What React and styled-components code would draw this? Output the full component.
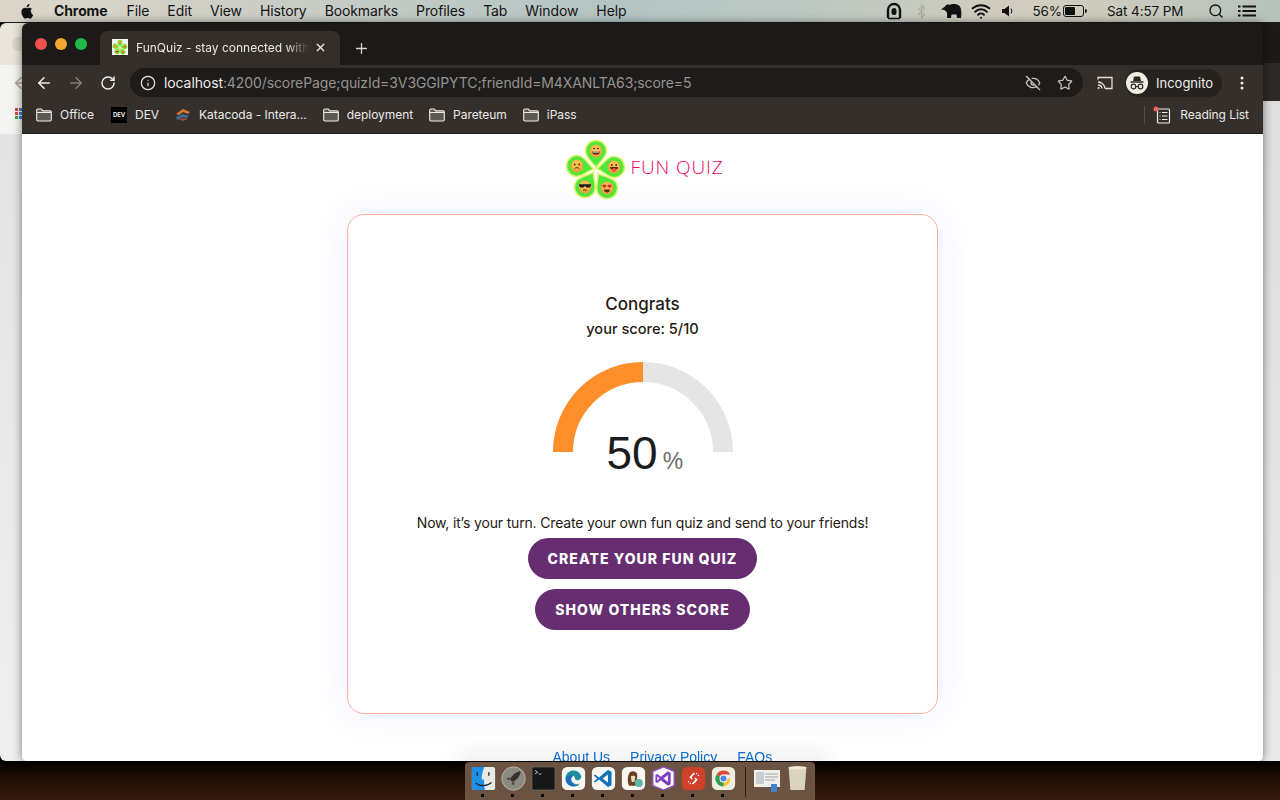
import React from "react";
import styled, { createGlobalStyle } from "styled-components";
import { ArrowLeft, ArrowRight, RotateCw, Info, EyeOff, Star, Plus, X, Search, Bluetooth, Wifi } from "lucide-react";

const Global = createGlobalStyle`
  html, body { margin: 0; padding: 0; width: 1280px; height: 800px; overflow: hidden; }
  * { box-sizing: border-box; }
`;

const Desktop = styled.div`
  position: relative; width: 1280px; height: 800px; overflow: hidden;
  font-family: Inter, "Liberation Sans", sans-serif;
  background: linear-gradient(180deg, #000 761px, #1c0d06 775px, #34190c 800px);
`;

const MenuBar = styled.div`
  position: absolute; left: 0; top: 0; width: 1280px; height: 23px;
  display: flex; align-items: center; padding-left: 20px;
  border-bottom: 1px solid #1a1a18;
  background: linear-gradient(90deg, #dcd6c9 0, #cfcfc6 200px, #b3c4c3 620px, #bcc8c2 800px, #d2cdbe 1020px, #c7c9bd 1150px, #b5c1bc 1280px);
  color: #141414; font-size: 14px; letter-spacing: -0.1px;
`;
const MenuItem = styled.span`
  margin-left: ${p => p.$gap}px; font-weight: ${p => (p.$bold ? 700 : 400)}; white-space: nowrap; line-height: 22px;
  font-size: ${p => (p.$small ? 13.5 : 14)}px;
`;
const MenuIcon = styled.span`
  margin-left: ${p => p.$gap}px; display: flex; align-items: center; justify-content: center; color: #111; height: 22px;
`;

const BackLeft = styled.div`
  position: absolute; left: 0; top: 23px; width: 60px; height: 738px; border-radius: 6px 0 0 6px;
  background: linear-gradient(180deg, #e9e5da 0, #e9e5da 42px, #f3f3f1 42px, #f3f3f1 111px, #e4e4e4 111px, #efefef 100%);
`;
const BackDot = styled.span`
  position: absolute; left: 12px; top: 14px; width: 14px; height: 14px; border-radius: 50%; background: #d8d3c6;
`;
const BackArrow = styled.span`
  position: absolute; left: 12px; top: 51px; color: #a8a49c; display: flex;
`;
const BackApps = styled.span`
  position: absolute; left: 15px; top: 85px; display: grid; grid-template-columns: repeat(3, 3px); gap: 1px;
`;
const AppDot = styled.span`
  width: 3px; height: 3px; background: ${p => p.$c};
`;
const BackRight = styled.div`
  position: absolute; left: 1240px; top: 23px; width: 40px; height: 738px;
  background: linear-gradient(180deg, #1b1a18 0, #1b1a18 40px, #2d2926 40px, #2d2926 78px, #dedede 78px, #eaeaea 100%);
`;

const Browser = styled.div`
  position: absolute; left: 22px; top: 23px; width: 1241px; height: 738px;
  border-radius: 6px 6px 5px 5px; overflow: hidden; display: flex; flex-direction: column;
  box-shadow: 0 0 10px rgba(0,0,0,.5);
`;
const TabStrip = styled.div`
  height: 42px; flex: none; background: #1b1a18; display: flex; align-items: flex-end; padding-left: 78px;
`;
const Lights = styled.div`
  position: absolute; left: 13px; top: 15px; display: flex; gap: 8px;
`;
const Light = styled.span`
  width: 12px; height: 12px; border-radius: 50%; background: ${p => p.$c};
`;
const Tab = styled.div`
  width: 240px; height: 34px; background: #352f2c; border-radius: 8px 8px 0 0;
  display: flex; align-items: center; padding: 0 0 2px 12px; color: #e9e6e2; font-size: 12px; position: relative;
`;
const Favicon = styled.span`
  width: 16px; height: 16px; background: #fdfdfb; display: flex; flex: none;
`;
const TabTitle = styled.span`
  margin-left: 8px; width: 173px; overflow: hidden; white-space: nowrap;
  -webkit-mask-image: linear-gradient(90deg, #000 150px, transparent 173px);
  mask-image: linear-gradient(90deg, #000 150px, transparent 173px);
`;
const TabClose = styled.span`
  margin-left: 5px; display: flex; color: #efeeec;
`;
const NewTab = styled.span`
  margin: 0 0 8px 13px; color: #d9d6d2; display: flex;
`;
const Toolbar = styled.div`
  height: 35px; flex: none; background: #352f2c; display: flex; align-items: center; padding-left: 13px;
`;
const NavBtn = styled.span`
  width: 18px; margin-right: ${p => p.$end ? 13 : 14}px; display: flex; justify-content: center; color: ${p => (p.$dim ? "#837e79" : "#efedea")};
`;
const Omnibox = styled.div`
  width: 953px; height: 29px; border-radius: 15px; background: #1d1c1a;
  display: flex; align-items: center; padding-left: 10px; font-size: 14px; color: #98938e; letter-spacing: -0.1px;
`;
const SiteInfo = styled.span`
  display: flex; color: #e8e6e2; margin-right: 8px;
`;
const Host = styled.span`
  color: #efedea;
`;
const OmniActions = styled.span`
  margin-left: auto; display: flex; align-items: center; gap: 16px; padding-right: 10px; color: #c6c3be;
`;
const CastBtn = styled.span`
  margin-left: 14px; display: flex; color: #e2e0dc;
`;
const ProfilePill = styled.div`
  margin-left: 12px; width: 97px; height: 28px; border-radius: 14px; background: #25221f;
  display: flex; align-items: center; padding-left: 1px; color: #efedea; font-size: 13px;
`;
const Avatar = styled.span`
  width: 22px; height: 22px; border-radius: 50%; background: #f3eee2; display: flex; align-items: center; justify-content: center; margin-right: 8px;
`;
const Kebab = styled.span`
  margin-left: 18px; display: flex; color: #efedea;
`;
const Bookmarks = styled.div`
  height: 34px; flex: none; background: #352f2c; display: flex; align-items: center; padding: 0 0 4px 14px; gap: 16px;
  color: #ece9e5; font-size: 12px; letter-spacing: -0.05px; border-bottom: 1px solid #221f1d;
`;
const Bookmark = styled.span`
  display: flex; align-items: center; gap: 8px; white-space: nowrap;
  &:first-child { margin-right: 1px; }
`;
const DevIcon = styled.span`
  width: 16px; height: 16px; background: #000; color: #eee; font-size: 6px; font-weight: 700; display: flex; align-items: center; justify-content: center;
`;
const ReadingList = styled.span`
  margin-left: auto; margin-right: 14px; padding-left: 8px; height: 18px; border-left: 1px solid #544e4a;
  display: flex; align-items: center; gap: 9px;
`;

const Page = styled.main`
  flex: 1; min-height: 0; overflow: hidden; background: #fff; display: flex; flex-direction: column; align-items: center; color: #1f1a14;
`;
const Brand = styled.header`
  height: 80px; flex: none; display: flex; align-items: flex-start; padding: 4px 0 0 3px;
`;
const BrandName = styled.span`
  margin: 17px 0 0 4px; color: #f0005f; font: 300 19px/24px "Open Sans", sans-serif; letter-spacing: 0.9px; white-space: nowrap;
`;
const Card = styled.section`
  width: 591px; height: 500px; flex: none; border: 1px solid #fdb0a6; border-radius: 17px; background: #fff;
  box-shadow: 0 0 32px rgba(110,110,255,.12);
  display: flex; flex-direction: column; align-items: center; padding-top: 79px;
`;
const Title = styled.h1`
  margin: 0; font-size: 17px; line-height: 20px; font-weight: 500; color: #1f1a14;
`;
const Score = styled.p`
  margin: 5px 0 0; font-size: 14.6px; line-height: 20px; font-weight: 500;
`;
const Gauge = styled.div`
  position: relative; width: 180px; height: 90px; margin-top: 23px;
`;
const GaugeValue = styled.div`
  position: absolute; left: 54px; top: 65px; display: flex; align-items: baseline; gap: 5px; font-family: "Liberation Sans", sans-serif; white-space: nowrap;
`;
const GaugeNumber = styled.span`
  font-size: 46px; line-height: 52px; color: #1c1c1c;
`;
const GaugeUnit = styled.span`
  font-size: 23px; line-height: 30px; color: #6a6a6a;
`;
const Prompt = styled.p`
  margin: 61px 0 0; font-size: 14px; line-height: 20px; color: #1f1a14; white-space: nowrap; letter-spacing: -0.17px;
`;
const ActionButton = styled.button`
  height: 41px; width: ${p => p.$w}px; margin-top: ${p => p.$top}px; border: 0; border-radius: 21px; background: #662d70; color: #fff;
  font: 800 14px Inter, sans-serif; letter-spacing: 1.05px; padding: 0; flex: none;
`;
const Footer = styled.footer`
  margin-top: 23px; flex: none; width: 400px; height: 52px; padding: 12px 0 0 110px;
  background: linear-gradient(180deg, #fff 0, #f2f2f2 26px);
  -webkit-mask-image: linear-gradient(90deg, transparent, #000 30px, #000 370px, transparent);
  mask-image: linear-gradient(90deg, transparent, #000 30px, #000 370px, transparent);
  display: flex; gap: 20px; font: 14px/16px "Liberation Sans", sans-serif;
`;
const FooterLink = styled.a`
  color: #0a6ccf; white-space: nowrap;
`;

const Dock = styled.div`
  position: absolute; left: 465px; top: 762px; width: 350px; height: 38px; background: #6b5241; border-radius: 4px 4px 0 0;
  display: flex; padding: 4px 0 0 3px;
`;
const DockSlot = styled.span`
  width: 30px; height: 34px; position: relative; display: flex; justify-content: center; align-items: ${p => (p.$wide ? "center" : "flex-start")}; flex: none;
  padding-bottom: ${p => (p.$wide ? 6 : 0)}px;
  svg { width: ${p => (p.$wide ? 28 : 25)}px; height: ${p => (p.$wide ? 28 : 25)}px; flex: none; }
`;
const RunDot = styled.span`
  position: absolute; left: 13px; bottom: 3px; width: 3px; height: 3px; background: #0b0b0b;
`;
const DockDivider = styled.span`
  width: 1px; height: 30px; margin: 1px 6px 0 7px; background: #2d1d14; flex: none;
`;

const pins = [
  { x: 30, y: 13, r: 0, face: "grin" },
  { x: 11, y: 28, r: -80, face: "sad" },
  { x: 48, y: 29, r: 84, face: "tongue" },
  { x: 19, y: 49, r: -150, face: "shades" },
  { x: 41, y: 50, r: 148, face: "hearts" },
];

const Face = ({ kind }) => (
  <g>
    <circle r="6.4" fill="#f2a33c" />
    <circle r="5" cy="-1" fill="#f7bf4c" />
    {kind === "grin" && (<><path d="M-3-2.5h2M1-2.5h2" stroke="#4a2a10" strokeWidth="1" /><path d="M-4 0.2h8a4 3.6 0 0 1-8 0z" fill="#5b2610" /><path d="M-3.4 .4h6.8v1h-6.8z" fill="#fff" /></>)}
    {kind === "sad" && (<><circle cx="-2.2" cy="-1.5" r=".9" fill="#4a2a10" /><circle cx="2.2" cy="-1.5" r=".9" fill="#4a2a10" /><path d="M-2.6 3a3 2.6 0 0 1 5.2 0" stroke="#4a2a10" strokeWidth="1" fill="none" /></>)}
    {kind === "tongue" && (<><circle cx="-2.2" cy="-2" r=".9" fill="#4a2a10" /><circle cx="2.2" cy="-2" r=".9" fill="#4a2a10" /><path d="M-4 0h8a4 3 0 0 1-8 0z" fill="#5b2610" /><circle cy="3" r="2" fill="#e6524f" /></>)}
    {kind === "shades" && (<><path d="M-6-2.8H6V-1.6L4.6 .6H1.4L0-1.2-1.4 .6H-4.6L-6-1.6z" fill="#1c1c1c" /><path d="M-2 3h4" stroke="#4a2a10" strokeWidth="1" /></>)}
    {kind === "hearts" && (<><path d="M-2.6 0.2L-4.6-1.8a1.2 1.2 0 0 1 2-1.2 1.2 1.2 0 0 1 2 1.2z" fill="#e3263c" /><path d="M2.6 0.2L.6-1.8a1.2 1.2 0 0 1 2-1.2 1.2 1.2 0 0 1 2 1.2z" fill="#e3263c" /><path d="M-3 1.6h6a3 2.8 0 0 1-6 0z" fill="#5b2610" /></>)}
  </g>
);

const Logo = ({ size }) => (
  <svg width={size} height={size} viewBox="0 0 60 62">
    {pins.map(p => (
      <g key={p.face} transform={`translate(${p.x} ${p.y})`}>
        <path transform={`rotate(${p.r})`} d="M0 17C-2 12-10.500 7-10.500 0A10.500 10.500 0 1 1 10.500 0C10.500 7 2 12 0 17Z" fill="#4ee83a" stroke="#e2f16a" strokeWidth="1.500" />
        <Face kind={p.face} />
      </g>
    ))}
  </svg>
);

const Apple = () => (
  <svg width="14" height="16" viewBox="0 0 14 16"><path fill="#111" d="M10.6 8.4c0-1.6 1.3-2.4 1.4-2.4-.8-1.1-2-1.3-2.400-1.300-1-.1-2 .6-2.500.6s-1.300-.6-2.200-.6C3.800 4.700 2.700 5.400 2 6.500.7 8.700 1.700 12 3 13.800c.6.900 1.300 1.900 2.300 1.900.9 0 1.200-.6 2.300-.6s1.400.6 2.300.6c1 0 1.600-.9 2.200-1.800.7-1 1-2 1-2-.1-.1-2-.8-2-3.500zM8.800 3.200c.5-.6.800-1.400.7-2.200-.7 0-1.600.5-2.100 1.100-.4.500-.8 1.300-.7 2.100.8.100 1.600-.4 2.100-1z" /></svg>
);
const Tunnel = () => (
  <svg width="16" height="18" viewBox="0 0 16 18"><path fill="none" stroke="#111" strokeWidth="2.400" d="M2 16V8a6 6 0 0 1 12 0v8" /><rect x="5.500" y="6" width="5" height="7" rx="2.500" fill="#111" /><path d="M2 16.500h12" stroke="#111" strokeWidth="1.500" /></svg>
);
const Elephant = () => (
  <svg width="21" height="16" viewBox="0 0 21 16"><path fill="#111" d="M0 6.500 4 3.500C5 1.500 7 1 8.500 2 11 .5 16 .5 18.500 3c1.800 1.800 2 6 1.800 9l-.3 3h-4l-.5-3.500h-5L10 15H6.200L6 9.500C5 8.500 4 7.500 3.500 7z" /></svg>
);
const Volume = () => (
  <svg width="14" height="14" viewBox="0 0 14 14"><path fill="#111" d="M1 5h2.500L8 1.500v11L3.500 9H1z" /><path d="M10 4.500a4 4 0 0 1 0 5" stroke="#111" fill="none" strokeWidth="1" /></svg>
);
const Battery = () => (
  <svg width="24" height="12" viewBox="0 0 24 12"><rect x=".5" y=".5" width="20" height="11" rx="2.500" fill="none" stroke="#111" /><rect x="2" y="2" width="10" height="8" rx="1" fill="#111" /><path d="M22 4v4a2 2 0 0 0 0-4z" fill="#111" /></svg>
);
const ListMenu = () => (
  <svg width="18" height="12" viewBox="0 0 18 12"><path d="M0 1.500h2.500M4.500 1.500H18M0 6h2.500M4.500 6H18M0 10.500h2.500M4.500 10.500H18" stroke="#111" strokeWidth="1.800" /></svg>
);
const FolderIcon = () => (
  <svg width="16" height="14" viewBox="0 0 16 14"><path d="M.7 2.200C.7 1.500 1.200 1 1.900 1h3.400l1.500 1.900h7.300c.7 0 1.200.5 1.200 1.200v7.700c0 .7-.5 1.200-1.200 1.200H1.900c-.7 0-1.200-.5-1.200-1.200z" fill="#5e5853" stroke="#f0eeea" strokeWidth="1.100" /><path d="M1 4.500h14" stroke="#f0eeea" strokeWidth="1" /></svg>
);
const Katacoda = () => (
  <svg width="16" height="14" viewBox="0 0 16 14"><path d="M1 6 8 1l7 3-2 2-5-2-4 3z" fill="#d7792e" /><path d="M1 9l7-3 6 2-2 2-4-1-6 3z" fill="#3c6c9c" /><path d="M3 11l6-1 4 1-5 2z" fill="#a04f2b" /></svg>
);
const Cast = () => (
  <svg width="16" height="14" viewBox="0 0 16 14" fill="none" stroke="currentColor" strokeWidth="1.300"><path d="M1 3.500V1.500h14v11H8" /><path d="M1 6a7 7 0 0 1 7 6.500M1 9a4 4 0 0 1 4 3.500" /><circle cx="1.600" cy="12" r="1" fill="currentColor" stroke="none" /></svg>
);
const Incognito = () => (
  <svg width="18" height="18" viewBox="0 0 18 18"><path d="M5 7l1-4.500h6L13 7z" fill="#2a2725" /><path d="M2.500 8h13" stroke="#2a2725" strokeWidth="1.500" /><circle cx="5.500" cy="12.500" r="2.300" fill="none" stroke="#2a2725" strokeWidth="1.200" /><circle cx="12.500" cy="12.500" r="2.300" fill="none" stroke="#2a2725" strokeWidth="1.200" /><path d="M7.800 12.500h2.400" stroke="#2a2725" strokeWidth="1.200" /></svg>
);
const KebabIcon = () => (
  <svg width="4" height="14" viewBox="0 0 4 14" fill="currentColor"><circle cx="2" cy="2" r="1.500" /><circle cx="2" cy="7" r="1.500" /><circle cx="2" cy="12" r="1.500" /></svg>
);
const ReadingIcon = () => (
  <svg width="18" height="18" viewBox="0 0 18 18"><rect x="4.500" y="3" width="12" height="14" rx="1" fill="none" stroke="#efedea" strokeWidth="1.200" /><path d="M9 6.500h5.500M9 10h5.500M9 13.500h5.500M6.500 6.500h1M6.500 10h1M6.500 13.500h1" stroke="#efedea" strokeWidth="1.200" /><circle cx="3" cy="3" r="2.500" fill="#f2645a" /></svg>
);

const Finder = () => (
  <svg viewBox="0 0 28 28"><rect x="1" y="1" width="26" height="26" rx="2" fill="#e9e9e4" /><path d="M3 1h12c-2 4-3 9-3 14h2.500c0 4 .5 8 1 12H3a2 2 0 0 1-2-2V3a2 2 0 0 1 2-2z" fill="#1f8fe6" /><path d="M7 7v4M20 7v4" stroke="#1a2530" strokeWidth="1.500" /><path d="M5 19c5 4 13 4 18-.5" stroke="#1a2530" strokeWidth="1.200" fill="none" /></svg>
);
const Launchpad = () => (
  <svg viewBox="0 0 28 28"><circle cx="14" cy="14" r="13.500" fill="#8b8a80" /><circle cx="14" cy="14" r="13" fill="none" stroke="#b5b4aa" /><path d="M21 6c-5 1-9 5-11 9l3 3c4-2 8-6 9-11z" fill="#35332f" /><path d="M10 13l-4 1 3 2zM15 18l-1 4-2-3z" fill="#35332f" /></svg>
);
const Terminal = () => (
  <svg viewBox="0 0 28 28"><rect x="1" y="1" width="26" height="26" rx="2" fill="#171717" stroke="#6a6a62" /><path d="M4.500 5l3 2-3 2" stroke="#eee" fill="none" strokeWidth=".9" /><path d="M8.500 9h3" stroke="#eee" strokeWidth=".9" /></svg>
);
const AppTile = ({ bg = "#f8f7f2", children }) => (
  <svg viewBox="0 0 28 28"><rect x="1" y="1" width="26" height="26" rx="6" fill={bg} />{children}</svg>
);
const Edge = () => (
  <AppTile><path d="M5 14a9 9 0 0 1 17.500-3c.8 3-1.500 5-4 5-2 0-3-1-3-2.500 0-2-2-3.500-4.500-3S6 13 5 14z" fill="#1f8f9e" /><path d="M5 14c0 6 5 9.500 10 9 2.500-.2 5-1.500 6-3.500-4 2-9 .5-9.500-4C11 13 13 11 15.500 11 11 9 6 11 5 14z" fill="#1e6fc4" /><path d="M12 17c1 4 6 5 9.500 2.500C17 21 13 20 12 17z" fill="#4fc65f" /></AppTile>
);
const VSCode = () => (
  <AppTile><path d="M19 4.500l4 2v15l-4 2L9 15l-4.500 3.500L3 17.500 7 14 3 10.500l1.500-1L9 13zM19 9.500L13 14l6 4.500z" fill="#0f74b8" /></AppTile>
);
const Beaver = () => (
  <AppTile><path d="M9 22c-2-5-2-11 1-15 3-2 7-1 8 2 1 4-1 6-1 13z" fill="#6d3f1f" /><path d="M11 12c1-1.500 4-1.500 5 0l-1 6h-3z" fill="#e9dcc6" /><circle cx="20" cy="19" r="4.500" fill="#5fb7a5" /></AppTile>
);
const VisualStudio = () => (
  <svg viewBox="0 0 28 28"><path d="M14 1l12 5v16l-12 5-12-5V6z" fill="#faf8fb" stroke="#8a4bc4" strokeWidth="1.500" /><path d="M19 6l3 1.500v13L19 22l-8-6-4 3-2-1V10l2-1 4 3zM19 10l-5 4 5 4zM7 11.500v5l2.500-2.500z" fill="#7d3fc0" /></svg>
);
const RemoteDesktop = () => (
  <AppTile bg="#d1412a"><path d="M15 8l-4.500 4.500 2 2M13 20l4.500-4.500-2-2" stroke="#fff" strokeWidth="1.700" fill="none" /><path d="M8 17l3 3M20 11l-3-3" stroke="#fff" strokeWidth="1.500" strokeDasharray="1.500 1.500" /></AppTile>
);
const ChromeApp = () => (
  <AppTile bg="#efece0">
    <path d="M14 14 6.200 9.500A9 9 0 0 1 21.800 9.500H14z" fill="#dd4a3c" />
    <path d="M14 14 6.200 9.500A9 9 0 0 0 14 23l4-9z" fill="#2f9e4f" />
    <path d="M14 14h7.800A9 9 0 0 1 14 23z" fill="#f6c230" />
    <circle cx="14" cy="14" r="4.400" fill="#fff" /><circle cx="14" cy="14" r="3.400" fill="#4a86e8" />
  </AppTile>
);
const DocThumb = () => (
  <svg viewBox="0 0 28 28"><rect x="1" y="4" width="26" height="17" fill="#f1efe8" /><rect x="3" y="6" width="8" height="12" fill="#c5cdd2" /><path d="M12 8h13M12 11h13M12 14h10" stroke="#9aa6ad" /><rect x="18" y="18" width="6" height="8" fill="#3f80c8" /></svg>
);
const Trash = () => (
  <svg viewBox="1 1 22 28"><path d="M2 2h20l-2 26H4z" fill="#d9d3bf" /><ellipse cx="12" cy="3" rx="10" ry="2" fill="#ece7d8" /></svg>
);

const left = ["File", "Edit", "View", "History", "Bookmarks", "Profiles", "Tab", "Window", "Help"];
const dockApps = [Finder, Launchpad, Terminal, Edge, VSCode, Beaver, VisualStudio, RemoteDesktop, ChromeApp];
const apps = ["#e2453c", "#3d7fd0", "#3aa657", "#e2453c", "#3d7fd0", "#e09a2e", "#3aa657", "#3d7fd0", "#e09a2e"];

const R = 80;
export default function App() {
  return (
    <Desktop>
      <Global />
      <BackLeft>
        <BackDot />
        <BackArrow><ArrowLeft size={18} /></BackArrow>
        <BackApps>{apps.map((c, i) => <AppDot key={i} $c={c} />)}</BackApps>
      </BackLeft>
      <BackRight />
      <MenuBar>
        <MenuIcon $gap={0}><Apple /></MenuIcon>
        <MenuItem $gap={20} $bold>Chrome</MenuItem>
        {left.map((t, i) => <MenuItem key={t} $gap={i === 0 ? 19 : 18}>{t}</MenuItem>)}
        <MenuIcon $gap={260}><Tunnel /></MenuIcon>
        <MenuIcon $gap={12}><Bluetooth size={15} color="#a9a99f" /></MenuIcon>
        <MenuIcon $gap={12}><Elephant /></MenuIcon>
        <MenuIcon $gap={9}><Wifi size={20} strokeWidth={2.4} /></MenuIcon>
        <MenuIcon $gap={10}><Volume /></MenuIcon>
        <MenuItem $gap={17} $small>56%</MenuItem>
        <MenuIcon $gap={1}><Battery /></MenuIcon>
        <MenuItem $gap={20} $small>Sat 4:57 PM</MenuItem>
        <MenuIcon $gap={25}><Search size={16} strokeWidth={2} /></MenuIcon>
        <MenuIcon $gap={14}><ListMenu /></MenuIcon>
      </MenuBar>
      <Browser>
        <TabStrip>
          <Lights>
            <Light $c="#f0504a" />
            <Light $c="#f5a733" />
            <Light $c="#1fb84a" />
          </Lights>
          <Tab>
            <Favicon><Logo size={16} /></Favicon>
            <TabTitle>FunQuiz - stay connected with</TabTitle>
            <TabClose><X size={13} strokeWidth={2.2} /></TabClose>
          </Tab>
          <NewTab><Plus size={17} strokeWidth={1.8} /></NewTab>
        </TabStrip>
        <Toolbar>
          <NavBtn><ArrowLeft size={18} strokeWidth={2} /></NavBtn>
          <NavBtn $dim><ArrowRight size={18} strokeWidth={2} /></NavBtn>
          <NavBtn $end><RotateCw size={16} strokeWidth={2.2} /></NavBtn>
          <Omnibox>
            <SiteInfo><Info size={16} strokeWidth={1.8} /></SiteInfo>
            <span><Host>localhost</Host>:4200/scorePage;quizId=3V3GGIPYTC;friendId=M4XANLTA63;score=5</span>
            <OmniActions>
              <EyeOff size={16} strokeWidth={2} />
              <Star size={16} strokeWidth={1.8} />
            </OmniActions>
          </Omnibox>
          <CastBtn><Cast /></CastBtn>
          <ProfilePill>
            <Avatar><Incognito /></Avatar>
            Incognito
          </ProfilePill>
          <Kebab><KebabIcon /></Kebab>
        </Toolbar>
        <Bookmarks>
          <Bookmark><FolderIcon /><span>Office</span></Bookmark>
          <Bookmark><DevIcon>DEV</DevIcon><span>DEV</span></Bookmark>
          <Bookmark><Katacoda /><span>Katacoda - Intera...</span></Bookmark>
          <Bookmark><FolderIcon /><span>deployment</span></Bookmark>
          <Bookmark><FolderIcon /><span>Pareteum</span></Bookmark>
          <Bookmark><FolderIcon /><span>iPass</span></Bookmark>
          <ReadingList><ReadingIcon /><span>Reading List</span></ReadingList>
        </Bookmarks>
        <Page>
          <Brand>
            <Logo size={62} />
            <BrandName>FUN QUIZ</BrandName>
          </Brand>
          <Card>
            <Title>Congrats</Title>
            <Score>your score: 5/10</Score>
            <Gauge>
              <svg width="180" height="90" viewBox="0 0 180 90">
                <path d={`M${90 - R} 90A${R} ${R} 0 0 1 ${90 + R} 90`} fill="none" stroke="#e5e5e5" strokeWidth="20" />
                <path d={`M${90 - R} 90A${R} ${R} 0 0 1 90 ${90 - R}`} fill="none" stroke="#ff8f2b" strokeWidth="20" />
              </svg>
              <GaugeValue>
                <GaugeNumber>50</GaugeNumber>
                <GaugeUnit>%</GaugeUnit>
              </GaugeValue>
            </Gauge>
            <Prompt>Now, it’s your turn. Create your own fun quiz and send to your friends!</Prompt>
            <ActionButton $w={229} $top={5}>CREATE YOUR FUN QUIZ</ActionButton>
            <ActionButton $w={215} $top={10}>SHOW OTHERS SCORE</ActionButton>
          </Card>
          <Footer>
            <FooterLink>About Us</FooterLink>
            <FooterLink>Privacy Policy</FooterLink>
            <FooterLink>FAQs</FooterLink>
          </Footer>
        </Page>
      </Browser>
      <Dock>
        {dockApps.map((Icon, i) => (
          <DockSlot key={i}><Icon /><RunDot /></DockSlot>
        ))}
        <DockDivider />
        <DockSlot $wide><DocThumb /></DockSlot>
        <DockSlot><Trash /></DockSlot>
      </Dock>
    </Desktop>
  );
}
